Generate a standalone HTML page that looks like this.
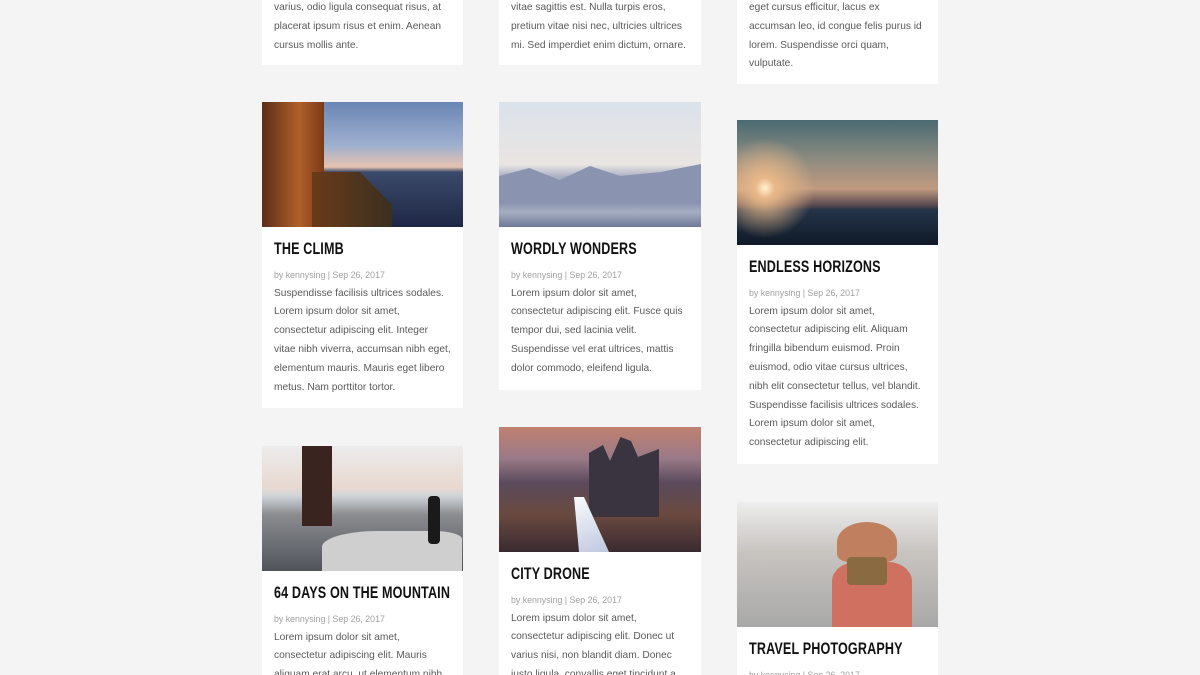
<!DOCTYPE html>
<html><head><meta charset="utf-8"><style>
*{margin:0;padding:0;box-sizing:border-box}
html{width:1200px;height:675px;overflow:hidden}
body{width:1200px;height:675px;overflow:hidden;background:#f4f4f4;font-family:"Liberation Sans",sans-serif;position:relative}
.card{position:absolute;background:#fff;width:201px;padding:0 12px 11px}
.img{height:125px;margin:0 -12px;position:relative;overflow:hidden}
.t{margin-top:13px;height:18px;line-height:18px;white-space:nowrap}
.t span{display:inline-block;font-weight:bold;font-size:17px;color:#111;transform:scaleX(.74);transform-origin:left center;letter-spacing:.2px}
.m{margin-top:10px;line-height:14px;font-size:8.8px;color:#a0a0a0}
.b{margin-top:2.6px;font-size:10.2px;line-height:18.8px;color:#5a5a5a}
</style></head><body>

<div class="card" style="left:262px;top:-10px;padding-top:9px;padding-bottom:10px"><div class="b" style="margin:0">varius, odio ligula consequat risus, at placerat ipsum risus et enim. Aenean cursus mollis ante.</div></div>
<div class="card" style="left:499px;top:-10px;width:202px;padding-top:9px;padding-bottom:10px"><div class="b" style="margin:0">vitae sagittis est. Nulla turpis eros, pretium vitae nisi nec, ultricies ultrices mi. Sed imperdiet enim dictum, ornare.</div></div>
<div class="card" style="left:737px;top:-13px;padding-top:12px;padding-bottom:10px"><div class="b" style="margin:0">eget cursus efficitur, lacus ex accumsan leo, id congue felis purus id lorem. Suspendisse orci quam, vulputate.</div></div>

<div class="card" style="left:262px;top:102px"><div class="img" style="background:linear-gradient(180deg,#6a86b4 0%,#9fb0cf 35%,#e6c2b0 52%,#3b4a6a 56%,#1e2745 100%)"><div style="position:absolute;left:0;top:0;width:62px;height:125px;background:linear-gradient(90deg,#5a2e18,#b0602a 60%,#7a3a18)"></div><div style="position:absolute;left:50px;top:70px;width:80px;height:55px;background:linear-gradient(90deg,#6a3a1a,#3a3020);clip-path:polygon(0 0,60% 0,100% 60%,100% 100%,0 100%)"></div></div>
<div class="t"><span>THE CLIMB</span></div><div class="m">by kennysing | Sep 26, 2017</div><div class="b">Suspendisse facilisis ultrices sodales. Lorem ipsum dolor sit amet, consectetur adipiscing elit. Integer vitae nibh viverra, accumsan nibh eget, elementum mauris. Mauris eget libero metus. Nam porttitor tortor.</div></div>

<div class="card" style="left:499px;top:102px;width:202px"><div class="img" style="background:linear-gradient(180deg,#dbe2ea 0%,#e9e5e2 50%,#a8aec3 60%,#8891ac 80%,#a6aec2 88%,#6e7896 100%)"><div style="position:absolute;left:0;top:62px;width:202px;height:40px;background:#8a94b0;clip-path:polygon(0 30%,15% 10%,30% 40%,45% 5%,60% 30%,80% 20%,100% 0,100% 100%,0 100%)"></div></div>
<div class="t"><span>WORDLY WONDERS</span></div><div class="m">by kennysing | Sep 26, 2017</div><div class="b">Lorem ipsum dolor sit amet, consectetur adipiscing elit. Fusce quis tempor dui, sed lacinia velit. Suspendisse vel erat ultrices, mattis dolor commodo, eleifend ligula.</div></div>

<div class="card" style="left:737px;top:120px"><div class="img" style="background:radial-gradient(circle at 28px 68px,#fff2d0 0,#e8b888 10px,transparent 50px),linear-gradient(180deg,#4a6a72 0%,#8a8a80 30%,#c09a80 55%,#5a4a50 68%,#233448 72%,#101a28 100%)"></div>
<div class="t"><span>ENDLESS HORIZONS</span></div><div class="m">by kennysing | Sep 26, 2017</div><div class="b">Lorem ipsum dolor sit amet, consectetur adipiscing elit. Aliquam fringilla bibendum euismod. Proin euismod, odio vitae cursus ultrices, nibh elit consectetur tellus, vel blandit. Suspendisse facilisis ultrices sodales. Lorem ipsum dolor sit amet, consectetur adipiscing elit.</div></div>

<div class="card" style="left:262px;top:446px"><div class="img" style="background:linear-gradient(180deg,#ececec 0%,#e8d8d0 33%,#d0d4d8 40%,#8a8c90 55%,#50545a 100%)"><div style="position:absolute;left:40px;top:0;width:30px;height:80px;background:#3a2420"></div><div style="position:absolute;left:60px;top:85px;width:140px;height:40px;background:#cfcfcf;border-radius:40% 20% 0 0"></div><div style="position:absolute;left:166px;top:50px;width:12px;height:48px;background:#1a1a1a;border-radius:4px"></div></div>
<div class="t"><span>64 DAYS ON THE MOUNTAIN</span></div><div class="m">by kennysing | Sep 26, 2017</div><div class="b">Lorem ipsum dolor sit amet, consectetur adipiscing elit. Mauris aliquam erat arcu, ut elementum nibh.</div></div>

<div class="card" style="left:499px;top:427px;width:202px"><div class="img" style="background:linear-gradient(180deg,#c08070 0%,#9a7a88 25%,#5a4a5a 45%,#6a4a40 70%,#3a2a30 100%)"><div style="position:absolute;left:90px;top:10px;width:70px;height:80px;background:#3a3440;clip-path:polygon(0 20%,20% 10%,30% 30%,45% 0,60% 5%,70% 25%,100% 15%,100% 100%,0 100%)"></div><div style="position:absolute;left:60px;top:70px;width:50px;height:55px;background:linear-gradient(160deg,#fff,#c0c8e0);clip-path:polygon(30% 0,50% 0,100% 100%,40% 100%)"></div></div>
<div class="t"><span>CITY DRONE</span></div><div class="m">by kennysing | Sep 26, 2017</div><div class="b">Lorem ipsum dolor sit amet, consectetur adipiscing elit. Donec ut varius nisi, non blandit diam. Donec justo ligula, convallis eget tincidunt a.</div></div>

<div class="card" style="left:737px;top:502px"><div class="img" style="background:linear-gradient(180deg,#eeeeee 0%,#c8c4c0 40%,#a8a8a8 100%)"><div style="position:absolute;left:100px;top:20px;width:60px;height:40px;background:#c08060;border-radius:50% 50% 20% 20%"></div><div style="position:absolute;left:95px;top:60px;width:80px;height:65px;background:#d07060;border-radius:30% 30% 0 0"></div><div style="position:absolute;left:110px;top:55px;width:40px;height:28px;background:#8a6a40;border-radius:4px"></div></div>
<div class="t"><span>TRAVEL PHOTOGRAPHY</span></div><div class="m">by kennysing | Sep 26, 2017</div><div class="b">Lorem ipsum dolor sit amet.</div></div>

</body></html>
